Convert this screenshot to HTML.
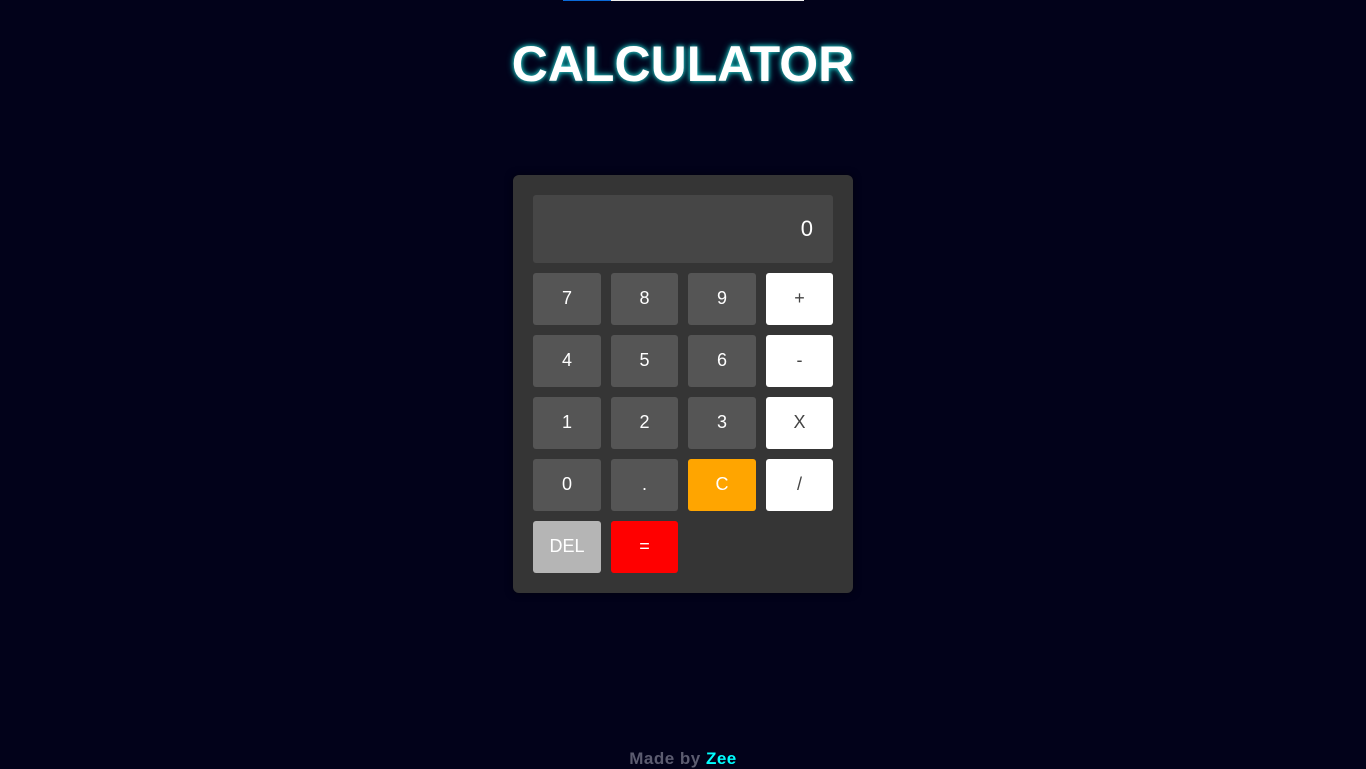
<!DOCTYPE html>
<html><head><style>
body{margin:0;width:1366px;height:768px;background:#02021a;font-family:"Liberation Sans",sans-serif;position:relative;overflow:hidden}
.bar{position:absolute;left:563px;top:0;width:241px;height:1px;background:#eee}
.bar i{position:absolute;left:0;top:0;width:48px;height:1px;background:#0a6ad8}
h1{position:absolute;top:35px;left:0;width:1366px;margin:0;text-align:center;color:#fff;font-size:50px;font-weight:bold;text-shadow:0 0 4px #3cc,0 0 8px #099}
.calc{position:absolute;left:513px;top:175px;width:340px;height:418px;background:#353535;border-radius:6px;box-shadow:0 0 8px rgba(0,0,0,.5)}
.disp{position:absolute;left:20px;top:20px;width:300px;height:68px;background:#464646;border-radius:3px;color:#fff;font-size:22px;text-align:right;box-sizing:border-box;padding:21px 20px 0 0}
.b{position:absolute;width:68px;height:52px;background:#555;color:#fff;border-radius:3px;font-size:18px;text-align:center;line-height:51px}
.w{background:#fff;color:#444}
</style></head><body>
<div class="bar"><i></i></div>
<h1>CALCULATOR</h1>
<div class="calc">
<div class="disp">0</div>
<div class="b" style="left:20px;top:98px">7</div>
<div class="b" style="left:98px;top:98px;width:67px">8</div>
<div class="b" style="left:175px;top:98px">9</div>
<div class="b w" style="left:253px;top:98px;width:67px">+</div>
<div class="b" style="left:20px;top:160px">4</div>
<div class="b" style="left:98px;top:160px;width:67px">5</div>
<div class="b" style="left:175px;top:160px">6</div>
<div class="b w" style="left:253px;top:160px;width:67px">-</div>
<div class="b" style="left:20px;top:222px">1</div>
<div class="b" style="left:98px;top:222px;width:67px">2</div>
<div class="b" style="left:175px;top:222px">3</div>
<div class="b w" style="left:253px;top:222px;width:67px">X</div>
<div class="b" style="left:20px;top:284px">0</div>
<div class="b" style="left:98px;top:284px;width:67px">.</div>
<div class="b" style="left:175px;top:284px;background:#ffa500">C</div>
<div class="b w" style="left:253px;top:284px;width:67px">/</div>
<div class="b" style="left:20px;top:346px;background:#b5b5b5">DEL</div>
<div class="b" style="left:98px;top:346px;width:67px;background:#f00">=</div>
</div>
<div style="position:absolute;top:749px;left:0;width:1366px;text-align:center;font-size:17px;letter-spacing:0.5px;font-weight:bold;color:#5c5c70">Made by <span style="color:#0ff">Zee</span></div>
</body></html>
